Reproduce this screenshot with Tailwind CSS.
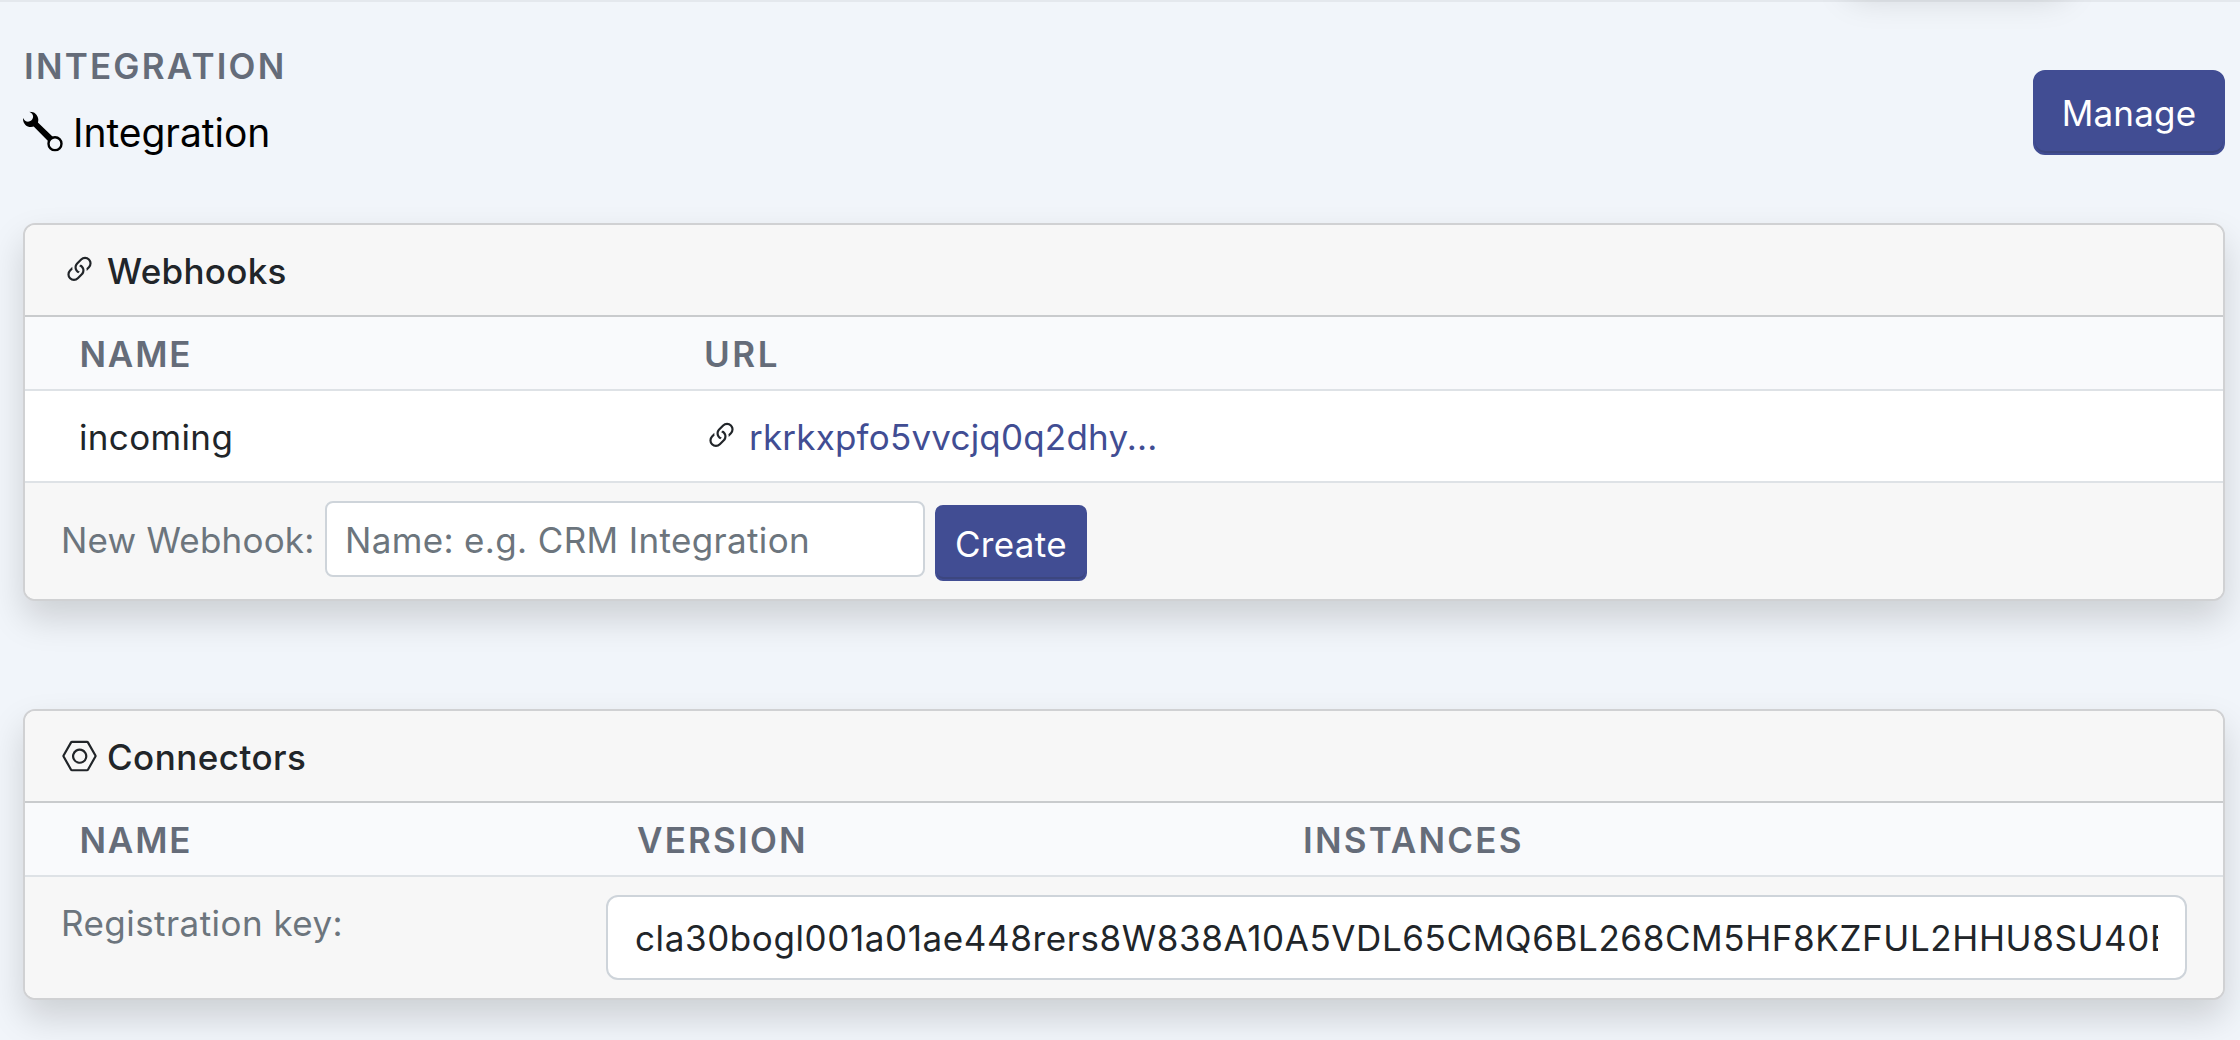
<!DOCTYPE html>
<html lang="en">
<head>
<meta charset="utf-8">
<title>Integration</title>
<script src="https://cdn.jsdelivr.net/npm/@tailwindcss/browser@4"></script>
</head>
<body class="relative h-[1040px] w-[2240px] overflow-hidden bg-[#f1f5fa] font-['Inter',sans-serif] text-[35px] leading-[52px] tracking-[0.35px] text-[#212529]">

<svg class="hidden">
  <symbol id="link" viewBox="0 0 16 16">
    <path d="M4.715 6.542 3.343 7.914a3 3 0 1 0 4.243 4.243l1.828-1.829A3 3 0 0 0 8.586 5.5L8 6.086a1 1 0 0 0-.154.199 2 2 0 0 1 .861 3.337L6.88 11.45a2 2 0 1 1-2.83-2.83l.793-.792a4 4 0 0 1-.128-1.287z"/>
    <path d="M6.586 4.672A3 3 0 0 0 7.414 9.5l.775-.776a2 2 0 0 1-.896-3.346L9.12 3.55a2 2 0 1 1 2.83 2.83l-.793.792c.112.42.155.855.128 1.287l1.372-1.372a3 3 0 1 0-4.243-4.243z"/>
  </symbol>
</svg>

<!-- bottom edge of the top bar and the shadow of its menu -->
<div class="absolute -top-[60px] left-[1848px] h-[39px] w-[218px] rounded-xl shadow-[0_17.5px_35px_rgba(0,0,0,0.15)]"></div>
<div class="h-[2px] bg-black/5"></div>

<header class="flex h-[221px] items-start justify-between pl-[23px] pr-[15px]">
  <div class="pt-[38px]">
    <div class="pl-px font-semibold leading-[52px] tracking-[2.2px] text-[#656c79]">INTEGRATION</div>
    <h1 class="mt-[14px] flex items-center text-[39px] tracking-[-0.05px] leading-[52px] text-black">
      <svg class="h-10 w-10 -translate-y-[1.5px]" viewBox="0 0 40 40">
        <path d="M0 6.500C-.3 12 3.600 15.700 8 15.600C9.200 15.600 10 15.300 10.700 15.100L25.500 29.900L30 25.400L14.900 10.900C15.300 9.800 15.400 8.500 15.200 7.300C14.500 2.600 10.800-.2 6.200.2C9.200 1.600 10.500 3.600 10 6C9.500 8.200 8 9.700 5.900 10.100C3.400 10.400 1.200 9.300 0 6.500Z"/>
        <circle cx="32" cy="32.300" r="6.500" fill="none" stroke="#000" stroke-width="2.400"/>
      </svg>
      <span class="ml-[10px] pt-px">Integration</span>
    </h1>
  </div>
  <button class="mt-[68px] h-[85px] w-[192px] rounded-xl border-2 border-[#414d93] bg-[#414d93] tracking-[0.2px] text-white shadow-[inset_0_-2px_0_rgba(39,44,51,0.2)]">Manage</button>
</header>

<main class="flex flex-col gap-[108px] pl-[23px] pr-[15px]">
  <section class="h-[378px] rounded-xl border-2 border-[#d0d1d3] bg-white shadow-[0_17.5px_35px_rgba(0,0,0,0.15)]">
    <div class="flex h-[92px] items-center rounded-t-[10px] border-b-2 border-[#c9cbcd] bg-[#f7f7f7] pl-[36.5px] font-medium">
      <svg class="h-[35px] w-[35px] -translate-y-[0.5px]" fill="currentColor"><use href="#link"/></svg>
      <span class="ml-[10.5px] pt-0.5 tracking-[0.3px]">Webhooks</span>
    </div>
    <div class="flex h-[74px] items-center border-b-2 border-[#dee2e6] bg-[#f9fafc] pl-[54.5px] pt-0.5 font-semibold tracking-[2.2px] text-[#656c79]">
      <span class="w-[624.5px] tracking-[1.8px]">NAME</span><span class="tracking-[2.6px]">URL</span>
    </div>
    <div class="flex h-[92px] items-center border-b-2 border-[#dee2e6] bg-white pl-[54px]">
      <span class="w-[624.5px] pt-0.5">incoming</span>
      <svg class="h-[35px] w-[35px] -translate-y-[0.5px]" fill="currentColor"><use href="#link"/></svg>
      <a class="ml-[10.5px] pt-0.5 tracking-[0.2px] text-[#414d93]">rkrkxpfo5vvcjq0q2dhy...</a>
    </div>
    <div class="flex h-[116px] items-start rounded-b-[10px] bg-[#f7f7f7] pl-9 pt-[18px]">
      <span class="w-[264px] leading-[78px] tracking-[0.2px] text-[#6c757d]">New Webhook:</span>
      <input class="h-[76px] w-[600px] rounded-lg border-2 border-[#ced4da] bg-white px-[18px] pt-px placeholder:text-[#6c757d] placeholder:opacity-100" placeholder="Name: e.g. CRM Integration">
      <button class="ml-[10px] mt-1 h-[76px] w-[152px] rounded-lg border-2 border-[#414d93] bg-[#414d93] pt-0.5 text-white shadow-[inset_0_-2px_0_rgba(39,44,51,0.2)]">Create</button>
    </div>
  </section>

  <section class="h-[291px] rounded-xl border-2 border-[#d0d1d3] bg-white shadow-[0_17.5px_35px_rgba(0,0,0,0.15)]">
    <div class="flex h-[92px] items-center rounded-t-[10px] border-b-2 border-[#c9cbcd] bg-[#f7f7f7] pl-[36.5px] font-medium">
      <svg class="h-[35px] w-[35px] -translate-y-[0.5px]" viewBox="0 0 16 16" fill="currentColor">
        <path d="m11.420 2 3.428 6-3.428 6H4.580L1.152 8 4.580 2zM4.580 1a1 1 0 0 0-.868.504l-3.428 6a1 1 0 0 0 0 .992l3.428 6A1 1 0 0 0 4.580 15h6.840a1 1 0 0 0 .868-.504l3.429-6a1 1 0 0 0 0-.992l-3.429-6A1 1 0 0 0 11.420 1z"/>
        <path d="M6.848 5.933a2.500 2.500 0 1 0 2.500 4.330 2.500 2.500 0 0 0-2.500-4.330m-1.780 3.915a3.500 3.500 0 1 1 6.061-3.500 3.500 3.500 0 0 1-6.062 3.500z"/>
      </svg>
      <span class="ml-[10.5px] pt-0.5 tracking-[0.45px]">Connectors</span>
    </div>
    <div class="flex h-[74px] items-center border-b-2 border-[#dee2e6] bg-[#f9fafc] pl-[54.5px] pt-0.5 font-semibold tracking-[2.2px] text-[#656c79]">
      <span class="w-[557.5px] tracking-[1.8px]">NAME</span><span class="w-[666px]">VERSION</span><span>INSTANCES</span>
    </div>
    <div class="flex h-[121px] items-start rounded-b-[10px] bg-[#f7f7f7] pl-9 pt-[18px]">
      <span class="w-[545px] pt-0.5 tracking-[0.45px] text-[#6c757d]">Registration key:</span>
      <input class="h-[85px] w-[1581px] rounded-xl border-2 border-[#ced4da] bg-white px-[27px] tracking-[0.6px]" value="cla30bogl001a01ae448rers8W838A10A5VDL65CMQ6BL268CM5HF8KZFUL2HHU8SU40E">
    </div>
  </section>
</main>
</body>
</html>
